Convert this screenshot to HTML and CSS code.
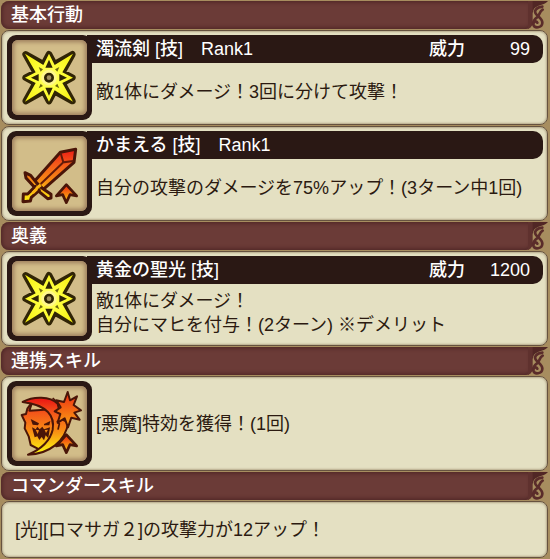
FILE: index.html
```html
<!DOCTYPE html>
<html lang="ja">
<head>
<meta charset="utf-8">
<meta name="viewport" content="width=device-width, initial-scale=1">
<title>スキル</title>
<link rel="stylesheet" href="styles.css">
</head>
<body>
<svg class="defs" aria-hidden="true">
  <defs>
    <linearGradient id="fire" gradientUnits="userSpaceOnUse" x1="0" y1="75" x2="0" y2="230">
      <stop offset="0" stop-color="#ec1c14"/>
      <stop offset="0.25" stop-color="#f4561a"/>
      <stop offset="0.6" stop-color="#f88c14"/>
      <stop offset="1" stop-color="#fdf010"/>
    </linearGradient>
    <linearGradient id="fire-small" gradientUnits="userSpaceOnUse" x1="0" y1="180" x2="0" y2="232">
      <stop offset="0" stop-color="#ee2412"/>
      <stop offset="1" stop-color="#ffd010"/>
    </linearGradient>
    <linearGradient id="burst" gradientUnits="userSpaceOnUse" x1="0" y1="50" x2="0" y2="155">
      <stop offset="0" stop-color="#ee2812"/>
      <stop offset="1" stop-color="#fba414"/>
    </linearGradient>
    <radialGradient id="glow" gradientUnits="userSpaceOnUse" cx="147" cy="143" r="100">
      <stop offset="0" stop-color="#fffb90"/>
      <stop offset="0.35" stop-color="#ffff3c"/>
      <stop offset="1" stop-color="#f4ee10"/>
    </radialGradient>
  </defs>
  <symbol id="star" viewBox="36 30 225 225">
    <path d="M147 73L163 103L217 73L187 127L217 143L187 159L217 213L163 183L147 213L131 183L77 213L107 159L77 143L107 127L77 73L131 103Z" fill="#302406" stroke="#302406" stroke-width="20" stroke-linejoin="round"/>
    <path d="M147 71L164 105L219 71L187 127L219 143L187 159L219 215L164 181L147 215L130 181L75 215L107 159L75 143L107 127L75 71L130 105Z" fill="url(#glow)"/>
    <path d="M147 89L158 113H136ZM147 197L158 173H136ZM93 143L116 132V154ZM201 143L178 132V154Z" fill="#302406"/>
    <path d="M165 118L178 111L172 125ZM129 118L116 111L122 125ZM165 168L178 175L172 161ZM129 168L116 175L122 161Z" fill="#6c6410"/>
    <circle cx="147" cy="143" r="19" fill="#302406" stroke="#fff78c" stroke-width="8"/>
    <circle cx="147" cy="143" r="7" fill="#a29162"/>
  </symbol>
  <symbol id="boost" viewBox="36 33 225 225">
    <path d="M199 179L230 213L210 209L199 233L188 209L169 213Z" fill="url(#fire-small)" stroke="#4a1508" stroke-width="8" stroke-linejoin="round"/>
  </symbol>
  <symbol id="sword" viewBox="36 33 225 225">
    <g fill="url(#fire)" stroke="#4a1508" stroke-width="9" stroke-linejoin="round">
      <path d="M227 73L222 112L130 193L104 168L181 82Z"/>
      <path d="M75 143L92 151L118 184L153 208V219L143 221L109 193L78 159Z"/>
      <path d="M106 184L118 196L94 217L91 228L69 230L70 207L83 207Z"/>
    </g>
    <path d="M109 190L122 180M98 204L111 191" stroke="#fbb412" stroke-width="9"/>
    <path d="M182 84L190 112L220 108M190 112L122 177" fill="none" stroke="#641a08" stroke-width="6"/>
  </symbol>
  <symbol id="demon" viewBox="36 33 225 225">
    <g stroke="#4a1508" stroke-width="6" stroke-linejoin="round">
      <path d="M96 82L82 101L78 117L65 120L76 143L74 160L86 184L92 210L113 221L129 222L145 204L160 165L157 125L133 95Z" fill="url(#fire)"/>
      <path d="M96 84L88 107L133 104L121 91Z" fill="#d9bc84"/>
      <path d="M68 81C101 63 150 64 173 86L184 132L205 142C196 199 148 237 84 239C126 221 151 195 158 164C165 124 143 90 68 81Z" fill="url(#fire)"/>
      <path d="M203 51L210 76L231 64L221 90L243 106L223 113L239 134L214 128L204 157L194 130L173 143L181 117L164 109L182 97L169 76L192 81Z" fill="url(#burst)"/>
    </g>
    <path d="M158 69L168 78M171 137L178 147L174 164" fill="none" stroke="#4a1508" stroke-width="5"/>
    <path d="M92 132L117 145L114 151L98 149ZM132 147L151 138L148 151L132 151ZM96 157L107 163L112 155L119 163L127 155L132 163L150 157L145 190L137 181L132 196L125 186L118 195L112 184L104 187Z" fill="#4a1508"/>
    <path d="M107 164L113 177L117 166ZM134 165L138 174L144 164Z" fill="#f58a14"/>
  </symbol>
  <symbol id="scroll" viewBox="0 0 60 84">
    <path d="M0 0H60C50 11 36 12 26 17C18 21 16 26 15 34L6 38Z" fill="#512725"/>
    <path d="M0 0H14V60C14 75 8 81 0 84Z" fill="#5f312e"/>
    <path d="M43 17C25 19 17 30 24 39C31 48 44 54 43 66C42 81 19 83 16 71C15 62 25 58 28 65M44 26C33 32 37 40 27 49C19 55 15 60 15 70" fill="none" stroke="#5a2c2a" stroke-width="8" stroke-linecap="round"/>
  </symbol>
</svg>

<main class="skills">
  <h2 class="heading"><span class="heading-label">基本行動</span><svg class="heading-scroll" aria-hidden="true"><use href="#scroll"/></svg></h2>
  <article class="card">
    <div class="icon"><svg aria-hidden="true"><use href="#star"/></svg></div>
    <div class="detail">
      <h3 class="bar"><span class="name">濁流剣 [技]　Rank1</span><span class="power">威力</span><span class="value">99</span></h3>
      <p class="text">敵1体にダメージ！3回に分けて攻撃！</p>
    </div>
  </article>
  <article class="card">
    <div class="icon"><svg aria-hidden="true"><use href="#sword"/><use href="#boost"/></svg></div>
    <div class="detail">
      <h3 class="bar"><span class="name">かまえる [技]　Rank1</span></h3>
      <p class="text">自分の攻撃のダメージを75%アップ！(3ターン中1回)</p>
    </div>
  </article>

  <h2 class="heading"><span class="heading-label">奥義</span><svg class="heading-scroll" aria-hidden="true"><use href="#scroll"/></svg></h2>
  <article class="card">
    <div class="icon"><svg aria-hidden="true"><use href="#star"/></svg></div>
    <div class="detail">
      <h3 class="bar"><span class="name">黄金の聖光 [技]</span><span class="power">威力</span><span class="value">1200</span></h3>
      <p class="text">敵1体にダメージ！<br>自分にマヒを付与！(2ターン) ※デメリット</p>
    </div>
  </article>

  <h2 class="heading"><span class="heading-label">連携スキル</span><svg class="heading-scroll" aria-hidden="true"><use href="#scroll"/></svg></h2>
  <article class="card">
    <div class="icon"><svg aria-hidden="true"><use href="#demon"/><use href="#boost"/></svg></div>
    <div class="detail">
      <p class="text">[悪魔]特効を獲得！(1回)</p>
    </div>
  </article>

  <h2 class="heading"><span class="heading-label">コマンダースキル</span><svg class="heading-scroll" aria-hidden="true"><use href="#scroll"/></svg></h2>
  <article class="card card-plain">
    <p class="text">[光][ロマサガ２]の攻撃力が12アップ！</p>
  </article>
</main>
</body>
</html>
```

FILE: styles.css
```css
* {
  box-sizing: border-box;
}

body {
  margin: 0;
  background: #a78d5f;
  color: #2b1a10;
  font-family: "Liberation Sans", "Noto Sans CJK JP", sans-serif;
  font-size: 18px;
  line-height: 24px;
}

h2,
h3,
p {
  margin: 0;
  font-size: 18px;
}

h2,
h3 {
  font-weight: 500;
}

.defs {
  position: absolute;
  width: 0;
  height: 0;
}

.skills {
  display: flex;
  flex-direction: column;
  gap: 1px;
  padding: 1px 2px 1px 1px;
}

.heading {
  display: flex;
  color: #fff;
}

.heading-label {
  flex: 1;
  padding: 2px 10px;
  border-radius: 8px 0 6px 8px;
  background: #6b3b37;
  box-shadow: inset 0 0 4px 1px #4b2323;
}

.heading-scroll {
  width: 20px;
  height: 28px;
  margin-left: -4px;
}

.card {
  display: flex;
  padding: 4px 4px 4px 5px;
  border: 1px solid #66523f;
  border-radius: 8px;
  background: #e4e0c2;
  box-shadow: inset 0 0 2px 1px #b5a98a;
}

.icon {
  flex: none;
  padding: 5px;
  border-radius: 9px;
  background: #2a1814;
}

.icon svg {
  display: block;
  width: 75px;
  height: 75px;
  border-radius: 6px;
  background: #d2bd89;
  box-shadow: inset 0 0 4px 2px #9c7c5c;
}

.detail {
  flex: 1;
  display: flex;
  flex-direction: column;
}

.bar {
  display: flex;
  margin-left: -5px;
  padding: 2px 13px 2px 9px;
  border-radius: 0 10px 10px 0;
  background: #2a1814;
  color: #fff;
}

.name {
  flex: 1;
}

.value {
  width: 65px;
  text-align: right;
}

.detail .text {
  flex: 1;
  display: flex;
  flex-direction: column;
  justify-content: center;
  padding-left: 4px;
}

.card-plain {
  padding: 16px 13px 15px;
}
```
